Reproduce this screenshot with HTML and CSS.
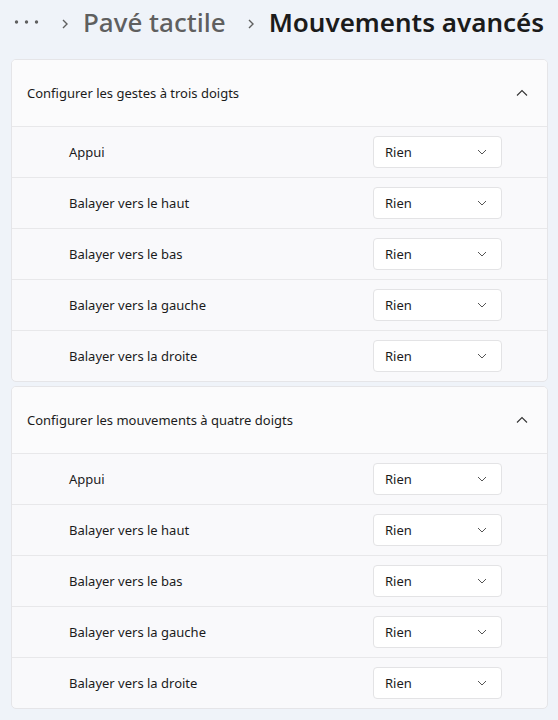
FILE: index.html
```html
<!DOCTYPE html>
<html lang="fr">
<head>
<meta charset="utf-8">
<link rel="stylesheet" href="styles.css">
</head>
<body>
<div class="crumbs">
  <svg class="more" width="26" height="6" viewBox="0 0 26 6"><circle cx="2.5" cy="3" r="1.7" fill="#5f5f5f"/><circle cx="12.5" cy="3" r="1.7" fill="#5f5f5f"/><circle cx="22.5" cy="3" r="1.7" fill="#5f5f5f"/></svg>
  <svg class="sep" width="10" height="12" viewBox="0 0 10 12"><path d="M3 2 L7 6 L3 10" fill="none" stroke="#5f5f5f" stroke-width="1.4"/></svg>
  <span class="parent">Pavé tactile</span>
  <svg class="sep" width="10" height="12" viewBox="0 0 10 12"><path d="M3 2 L7 6 L3 10" fill="none" stroke="#5f5f5f" stroke-width="1.4"/></svg>
  <span class="current">Mouvements avancés</span>
</div>
<main class="content">
  <section class="card">
    <div class="card-head">
      <span>Configurer les gestes à trois doigts</span>
      <svg width="12" height="8" viewBox="0 0 12 8"><path d="M1 6.5 L6 1.5 L11 6.5" fill="none" stroke="#333" stroke-width="1.1"/></svg>
    </div>
    <div class="row"><span>Appui</span><div class="select"><span>Rien</span><svg width="10" height="6" viewBox="0 0 10 6"><path d="M1 1 L5 5 L9 1" fill="none" stroke="#555" stroke-width="1"/></svg></div></div>
    <div class="row"><span>Balayer vers le haut</span><div class="select"><span>Rien</span><svg width="10" height="6" viewBox="0 0 10 6"><path d="M1 1 L5 5 L9 1" fill="none" stroke="#555" stroke-width="1"/></svg></div></div>
    <div class="row"><span>Balayer vers le bas</span><div class="select"><span>Rien</span><svg width="10" height="6" viewBox="0 0 10 6"><path d="M1 1 L5 5 L9 1" fill="none" stroke="#555" stroke-width="1"/></svg></div></div>
    <div class="row"><span>Balayer vers la gauche</span><div class="select"><span>Rien</span><svg width="10" height="6" viewBox="0 0 10 6"><path d="M1 1 L5 5 L9 1" fill="none" stroke="#555" stroke-width="1"/></svg></div></div>
    <div class="row"><span>Balayer vers la droite</span><div class="select"><span>Rien</span><svg width="10" height="6" viewBox="0 0 10 6"><path d="M1 1 L5 5 L9 1" fill="none" stroke="#555" stroke-width="1"/></svg></div></div>
  </section>
  <section class="card">
    <div class="card-head">
      <span>Configurer les mouvements à quatre doigts</span>
      <svg width="12" height="8" viewBox="0 0 12 8"><path d="M1 6.5 L6 1.5 L11 6.5" fill="none" stroke="#333" stroke-width="1.1"/></svg>
    </div>
    <div class="row"><span>Appui</span><div class="select"><span>Rien</span><svg width="10" height="6" viewBox="0 0 10 6"><path d="M1 1 L5 5 L9 1" fill="none" stroke="#555" stroke-width="1"/></svg></div></div>
    <div class="row"><span>Balayer vers le haut</span><div class="select"><span>Rien</span><svg width="10" height="6" viewBox="0 0 10 6"><path d="M1 1 L5 5 L9 1" fill="none" stroke="#555" stroke-width="1"/></svg></div></div>
    <div class="row"><span>Balayer vers le bas</span><div class="select"><span>Rien</span><svg width="10" height="6" viewBox="0 0 10 6"><path d="M1 1 L5 5 L9 1" fill="none" stroke="#555" stroke-width="1"/></svg></div></div>
    <div class="row"><span>Balayer vers la gauche</span><div class="select"><span>Rien</span><svg width="10" height="6" viewBox="0 0 10 6"><path d="M1 1 L5 5 L9 1" fill="none" stroke="#555" stroke-width="1"/></svg></div></div>
    <div class="row"><span>Balayer vers la droite</span><div class="select"><span>Rien</span><svg width="10" height="6" viewBox="0 0 10 6"><path d="M1 1 L5 5 L9 1" fill="none" stroke="#555" stroke-width="1"/></svg></div></div>
  </section>
</main>
</body>
</html>
```
FILE: styles.css
```css
* { box-sizing: border-box; }
body {
  margin: 0;
  background: #eff3f9;
  font-family: "Noto Sans", "Open Sans", sans-serif;
  color: #1b1b1b;
  width: 558px;
  height: 720px;
  overflow: hidden;
}
.crumbs {
  height: 59px;
  display: flex;
  align-items: center;
  padding: 0 0 16px 14px;
  white-space: nowrap;
}
.sep { margin: 4px 13px 0 20px; }
.parent {
  font-size: 26px;
  color: #5f5f5f;
  font-weight: 500;
}
.current {
  font-size: 26px;
  font-weight: 600;
  color: #1b1b1b;
}
.content {
  display: flex;
  flex-direction: column;
  gap: 4px;
  padding: 0 10px 0 11px;
}
.card {
  background: #f9f9fb;
  border: 1px solid #e5e5e8;
  border-radius: 5px;
  overflow: hidden;
}
.card-head {
  height: 66px;
  display: flex;
  align-items: center;
  justify-content: space-between;
  padding: 0 19px 0 15px;
  font-size: 13px;
  background: #fbfbfc;
}
.row {
  height: 51px;
  border-top: 1px solid #e8e8ea;
  display: flex;
  align-items: center;
  justify-content: space-between;
  padding: 0 45px 0 57px;
  font-size: 13px;
}
.select {
  width: 129px;
  height: 32px;
  background: #fff;
  border: 1px solid #e3e3e5;
  border-radius: 4px;
  display: flex;
  align-items: center;
  justify-content: space-between;
  padding: 0 14px 0 11px;
  font-size: 13px;
}
```
